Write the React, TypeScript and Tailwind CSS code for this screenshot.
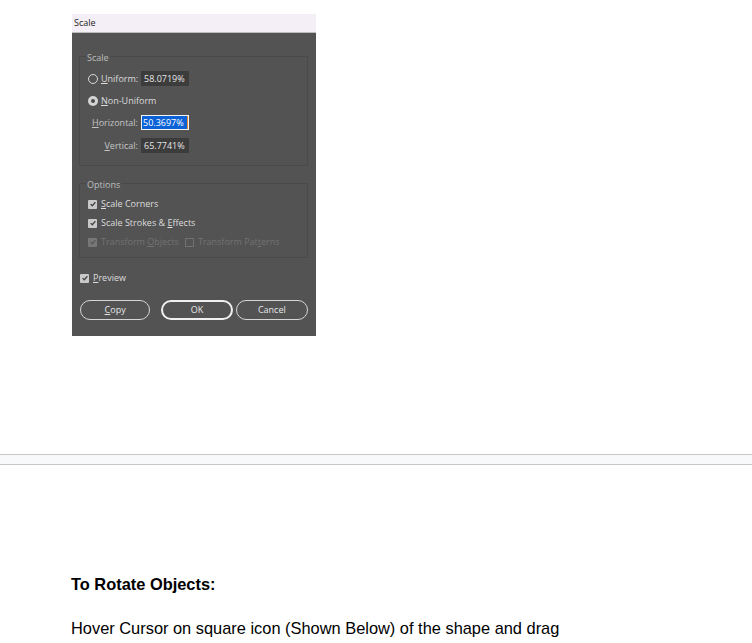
import type { ReactNode } from "react";

function Check({ disabled = false }: { disabled?: boolean }) {
  return (
    <span
      className={`flex h-[9px] w-[9px] shrink-0 items-center justify-center rounded-[1px] ${
        disabled ? "bg-[#777777]" : "bg-[#c9c9c9]"
      }`}
    >
      <svg viewBox="0 0 10 10" className="h-[8px] w-[8px]">
        <path
          d="M2 5.2 L4.1 7.2 L8 2.8"
          fill="none"
          stroke={disabled ? "#5a5a5a" : "#454545"}
          strokeWidth="1.6"
        />
      </svg>
    </span>
  );
}

function Radio({ on = false }: { on?: boolean }) {
  return on ? (
    <span className="flex h-[10px] w-[10px] shrink-0 items-center justify-center rounded-full bg-[#d4d4d4]">
      <span className="h-[4px] w-[4px] rounded-full bg-[#4a4a4a]" />
    </span>
  ) : (
    <span className="h-[10px] w-[10px] shrink-0 rounded-full border border-[#d8d8d8]" />
  );
}

function Field({ children }: { children: ReactNode }) {
  return (
    <div className="flex h-[15px] w-[48px] items-center bg-[#3c3c3c] pl-[3px] text-[#e6e6e6]">
      {children}
    </div>
  );
}

function Group({ title, className, children }: { title: string; className: string; children: ReactNode }) {
  return (
    <div className={`relative border border-[#4a4a4a] ${className}`}>
      <span className="absolute -top-[5px] left-[6px] bg-[#535353] px-[1px] leading-[12px] text-[#bdbdbd]">
        {title}
      </span>
      {children}
    </div>
  );
}

function Pill({ children, primary = false }: { children: ReactNode; primary?: boolean }) {
  return (
    <div
      className={`flex h-[20px] items-center justify-center rounded-full text-[#e6e6e6] ${
        primary ? "border-2 border-[#f0f0f0]" : "border border-[#d6d6d6]"
      }`}
    >
      {children}
    </div>
  );
}

function ScaleDialog() {
  return (
    <div className="w-[244px] font-['Open_Sans','Noto_Sans',sans-serif] text-[9px]">
      {/* title bar */}
      <div className="flex h-[19px] items-center border-b border-[#bdbdbd] bg-[#f4eff7] pl-[2px] text-[#1c1c1c]">
        Scale
      </div>

      <div className="h-[303px] bg-[#535353] pl-[7px] pr-[8px] pt-[23px] text-[#dcdcdc]">
        <Group title="Scale" className="h-[110px] pl-[8px] pt-[14px]">
          <div className="flex flex-col gap-[7px]">
            <div className="flex h-[15px] items-center">
              <div className="flex w-[53px] items-center gap-[3px]">
                <Radio />
                <span>
                  <u>U</u>niform:
                </span>
              </div>
              <Field>58.0719%</Field>
            </div>
            <div className="flex h-[15px] items-center gap-[3px]">
              <Radio on />
              <span>
                <u>N</u>on-Uniform
              </span>
            </div>
            <div className="flex h-[15px] items-center">
              <span className="w-[53px] pr-[3px] text-right text-[#c4c4c4]">
                <u>H</u>orizontal:
              </span>
              <div className="flex h-[15px] w-[48px] items-center bg-[#f4f4f4] p-[1px]">
                <span className="flex h-full flex-1 items-center bg-[#0b62d6] pl-[1px] text-white">50.3697%</span>
                <span className="h-full w-[1px] bg-[#e8872c]" />
              </div>
            </div>
            <div className="mt-[1px] flex h-[15px] items-center">
              <span className="w-[53px] pr-[3px] text-right text-[#c4c4c4]">
                <u>V</u>ertical:
              </span>
              <Field>65.7741%</Field>
            </div>
          </div>
        </Group>

        <Group title="Options" className="mt-[17px] h-[75px] pl-[8px] pt-[14px]">
          <div className="flex flex-col gap-[7px]">
            <div className="flex h-[12px] items-center gap-[4px]">
              <Check />
              <span>
                <u>S</u>cale Corners
              </span>
            </div>
            <div className="flex h-[12px] items-center gap-[4px]">
              <Check />
              <span>
                Scale Strokes &amp; <u>E</u>ffects
              </span>
            </div>
            <div className="flex h-[12px] items-center gap-[4px] text-[#727272]">
              <Check disabled />
              <span>
                Transform <u>O</u>bjects
              </span>
              <span className="ml-[2px] h-[9px] w-[9px] border border-[#727272]" />
              <span>
                Transform Pat<u>t</u>erns
              </span>
            </div>
          </div>
        </Group>

        <div className="mt-[14px] flex h-[12px] items-center gap-[4px] pl-[1px]">
          <Check />
          <span>
            <u>P</u>review
          </span>
        </div>

        <div className="mt-[16px] flex pl-[1px]">
          <div className="w-[71px]">
            <Pill>
              <u>C</u>opy
            </Pill>
          </div>
          <div className="ml-[11px] w-[72px]">
            <Pill primary>OK</Pill>
          </div>
          <div className="ml-[3px] w-[73px]">
            <Pill>Cancel</Pill>
          </div>
        </div>
      </div>
    </div>
  );
}

export default function App() {
  return (
    <div className="min-h-screen bg-white font-['Liberation_Sans',Arial,sans-serif] text-black">
      <div className="pl-[72px] pt-[14px]">
        <ScaleDialog />
      </div>

      <div className="mt-[118px] h-[11px] border-y border-[#c6c6c6] bg-[#f8f9fa]" />

      <h3 className="mt-[110px] pl-[71px] text-[16.4px] font-bold leading-[18px]">To Rotate Objects:</h3>
      <p className="mt-[26px] pl-[71px] text-[16.4px] leading-[18px]">
        Hover Cursor on square icon (Shown Below) of the shape and drag
      </p>
    </div>
  );
}
